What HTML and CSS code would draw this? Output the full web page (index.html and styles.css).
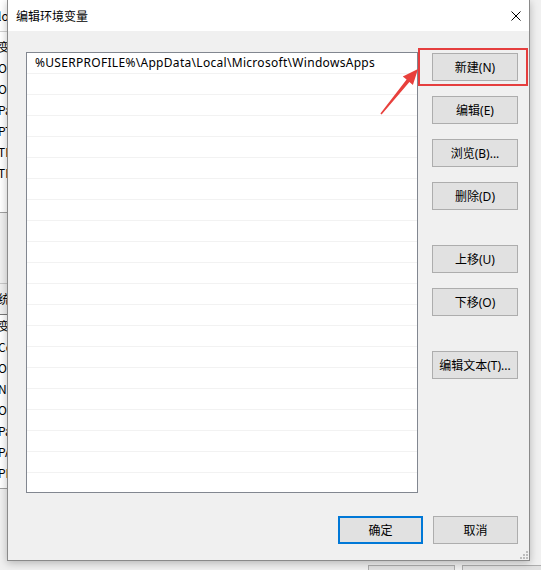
FILE: index.html
```html
<!DOCTYPE html>
<html lang="zh-CN">
<head>
<meta charset="utf-8">
<title>编辑环境变量</title>
<link rel="stylesheet" href="styles.css">
</head>
<body>
<div class="desktop">
  <div class="bg-left">
    <div class="bg-title">lo</div>
    <div class="bg-list bg-list-top">
      <div class="bg-row">变</div>
      <div class="bg-row">O</div>
      <div class="bg-row">O</div>
      <div class="bg-row">Pa</div>
      <div class="bg-row">PT</div>
      <div class="bg-row">TE</div>
      <div class="bg-row">TM</div>
    </div>
    <div class="bg-gap"></div>
    <div class="bg-section">统</div>
    <div class="bg-list bg-list-bottom">
      <div class="bg-row">变</div>
      <div class="bg-row">Co</div>
      <div class="bg-row">O</div>
      <div class="bg-row">N</div>
      <div class="bg-row">O</div>
      <div class="bg-row">Pa</div>
      <div class="bg-row">PA</div>
      <div class="bg-row">PR</div>
    </div>
  </div>
  <div class="bg-bottom">
    <div class="bg-btn bg-btn-a"></div>
    <div class="bg-btn bg-btn-b"></div>
  </div>
</div>

<div class="dialog">
  <div class="titlebar">
    <span class="title">编辑环境变量</span>
    <span class="close">
      <svg width="10" height="10" viewBox="0 0 10 10"><path d="M0.5 0.5 L9.5 9.5 M9.5 0.5 L0.5 9.5" stroke="#000" stroke-width="1" fill="none"/></svg>
    </span>
  </div>
  <div class="body">
    <div class="main">
      <div class="list">
        <div class="row row-path">%USERPROFILE%\AppData\Local\Microsoft\WindowsApps</div>
        <div class="row"></div><div class="row"></div><div class="row"></div><div class="row"></div>
        <div class="row"></div><div class="row"></div><div class="row"></div><div class="row"></div>
        <div class="row"></div><div class="row"></div><div class="row"></div><div class="row"></div>
        <div class="row"></div><div class="row"></div><div class="row"></div><div class="row"></div>
        <div class="row"></div><div class="row"></div><div class="row"></div>
      </div>
      <div class="buttons">
        <div class="group">
          <button class="btn">新建(N)</button>
          <button class="btn">编辑(E)</button>
          <button class="btn">浏览(B)...</button>
          <button class="btn">删除(D)</button>
        </div>
        <div class="group">
          <button class="btn">上移(U)</button>
          <button class="btn">下移(O)</button>
        </div>
        <div class="group">
          <button class="btn">编辑文本(T)...</button>
        </div>
      </div>
    </div>
    <div class="footer">
      <button class="btn btn-default">确定</button>
      <button class="btn">取消</button>
    </div>
  </div>
  <div class="grip">
    <svg width="9" height="9" viewBox="0 0 9 9" fill="#bcbcbc">
      <rect x="7" y="1" width="2" height="2"/>
      <rect x="4" y="4" width="2" height="2"/><rect x="7" y="4" width="2" height="2"/>
      <rect x="1" y="7" width="2" height="2"/><rect x="4" y="7" width="2" height="2"/><rect x="7" y="7" width="2" height="2"/>
    </svg>
  </div>
  <div class="highlight"></div>
  <svg class="arrow" width="50" height="60" viewBox="370 62 50 60">
    <polygon points="379.4,113.6 405.6,79.6 401.8,76.6 417,69 411.9,85 408.4,82 380.6,114.4" fill="#e8403c"/>
  </svg>
</div>
</body>
</html>
```

FILE: styles.css
```css
html, body {
  margin: 0;
  padding: 0;
}
body {
  width: 541px;
  height: 570px;
  overflow: hidden;
  position: relative;
  background: #f0f0f0;
  font-family: "Segoe UI", "Noto Sans", "Noto Sans CJK SC", sans-serif;
  font-size: 12px;
  color: #000;
}

/* background window (behind the dialog) */
.desktop {
  position: absolute;
  left: 0;
  top: 0;
  width: 541px;
  height: 570px;
  background: #f0f0f0;
}
.bg-left {
  width: 12px;
  overflow: hidden;
  display: flex;
  flex-direction: column;
  font-family: "Noto Sans CJK SC", sans-serif;
  font-size: 12px;
  white-space: nowrap;
}
.bg-title {
  height: 31px;
  line-height: 31px;
  background: #fff;
  border-bottom: 1px solid #d0d0d0;
  margin-left: -2px;
}
.bg-list {
  background: #fff;
  display: flex;
  flex-direction: column;
}
.bg-list-top {
  padding-top: 4px;
  height: 176px;
  border-bottom: 1px solid #a0a0a0;
}
.bg-row {
  height: 21px;
  line-height: 21px;
  margin-left: -2px;
}
.bg-gap {
  height: 70px;
  border-bottom: 1px solid #c8c8c8;
}
.bg-section {
  height: 30px;
  line-height: 30px;
  margin-left: -2px;
  border-bottom: 1px solid #777;
}
.bg-list-bottom {
  height: 173px;
  border-bottom: 1px solid #a0a0a0;
}
.bg-bottom {
  position: absolute;
  left: 0;
  top: 564px;
  width: 541px;
  height: 6px;
}
.bg-btn {
  position: absolute;
  top: 1px;
  height: 20px;
  background: #e1e1e1;
  border: 1px solid #adadad;
}
.bg-btn-a { left: 368px; width: 85px; }
.bg-btn-b { left: 462px; width: 85px; }

/* dialog window */
.dialog {
  position: absolute;
  left: 7px;
  top: 0;
  width: 521px;
  height: 560px;
  border: 1px solid #8a8a8a;
  border-top: none;
  background: #f0f0f0;
  box-shadow: 0 2px 8px rgba(0, 0, 0, 0.25);
  display: flex;
  flex-direction: column;
}
.titlebar {
  height: 31px;
  background: #fff;
  display: flex;
  align-items: center;
  justify-content: space-between;
  padding: 0 8px 0 8px;
  flex-shrink: 0;
}
.title {
  font-family: "Noto Sans CJK SC", sans-serif;
  font-size: 12px;
  color: #000;
}
.close {
  display: flex;
  width: 10px;
  height: 10px;
}
.body {
  flex: 1;
  display: flex;
  flex-direction: column;
  padding: 21px 11px 16px 18px;
}
.main {
  display: flex;
  gap: 14px;
}
.list {
  width: 390px;
  height: 439px;
  border: 1px solid #828790;
  background: #fff;
  display: flex;
  flex-direction: column;
  overflow: hidden;
}
.row {
  height: 20px;
  line-height: 20px;
  border-bottom: 1px solid #f2f2f2;
  padding-left: 8px;
  flex-shrink: 0;
  white-space: nowrap;
  font-size: 12px;
}
.row-path {
  letter-spacing: 0.3px;
}
.buttons {
  display: flex;
  flex-direction: column;
  gap: 35px;
  padding-top: 1px;
}
.group {
  display: flex;
  flex-direction: column;
  gap: 15px;
}
.btn {
  width: 86px;
  height: 28px;
  margin: 0;
  padding: 0;
  background: #e1e1e1;
  border: 1px solid #adadad;
  font-family: "Segoe UI", "Noto Sans", "Noto Sans CJK SC", sans-serif;
  font-size: 12px;
  color: #000;
  border-radius: 0;
}
.btn-default {
  border: 2px solid #0078d7;
}
.footer {
  margin-top: auto;
  display: flex;
  justify-content: flex-end;
  gap: 10px;
}
.footer .btn {
  width: 85px;
}
.grip {
  position: absolute;
  right: 1px;
  bottom: 1px;
  width: 9px;
  height: 9px;
  display: flex;
}
.highlight {
  position: absolute;
  left: 410px;
  top: 48px;
  width: 106px;
  height: 34px;
  border: 2px solid #e53e3e;
}
.arrow {
  position: absolute;
  left: 363px;
  top: 62px;
}
```
